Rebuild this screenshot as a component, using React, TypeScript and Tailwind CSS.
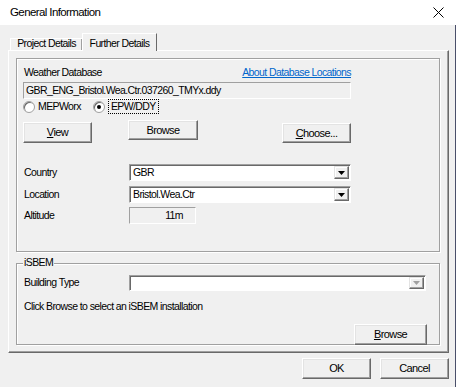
import type { ReactNode } from 'react'

const font = "font-['Liberation_Sans',Arial,sans-serif]"

const Btn = ({ children, className = '' }: { children: ReactNode; className?: string }) => (
  <div
    className={`flex items-center justify-center bg-[#f0f0f0] border-t border-l border-white border-r border-b border-r-[#696969] border-b-[#696969] shadow-[inset_-1px_-1px_0_#a0a0a0,inset_1px_1px_0_#e3e3e3] text-black text-[11px] whitespace-nowrap ${className}`}
  >
    {children}
  </div>
)

const Combo = ({ value, disabled = false, className = '' }: { value: string; disabled?: boolean; className?: string }) => (
  <div
    className={`flex items-stretch bg-white border-t border-l border-[#a0a0a0] border-r border-b border-r-white border-b-white shadow-[inset_1px_1px_0_#696969] ${className}`}
  >
    <div className="flex-1 pl-[3px] flex items-center text-black leading-none">{value}</div>
    <div className="w-[15px] my-[1px] mr-[1px] bg-[#f0f0f0] border-t border-l border-[#e3e3e3] border-r border-b border-r-[#696969] border-b-[#696969] shadow-[inset_-1px_-1px_0_#a0a0a0,inset_1px_1px_0_white] flex items-center justify-center">
      <svg width="7" height="4" viewBox="0 0 7 4">
        <path d="M0 0h7L3.5 4z" fill={disabled ? '#a0a0a0' : '#000'} />
      </svg>
    </div>
  </div>
)

const Radio = ({ checked }: { checked?: boolean }) => (
  <div className="w-[12px] h-[12px] rounded-full bg-white border border-[#a0a0a0] shadow-[inset_1px_1px_0_#696969] flex items-center justify-center">
    {checked && <div className="w-[4px] h-[4px] rounded-full bg-black" />}
  </div>
)

export default function App() {
  return (
    <div className={`w-[456px] h-[387px] flex flex-col bg-white ${font} text-[10.5px] tracking-[-0.6px] text-black whitespace-nowrap`}>
      {/* title bar */}
      <div className="h-[25px] flex items-center justify-between pl-[10px] pr-[12px] bg-white">
        <span className="text-[11.5px] tracking-[-0.6px]">General Information</span>
        <svg width="11" height="11" viewBox="0 0 11 11">
          <path d="M0.5 0.5L10.5 10.5M10.5 0.5L0.5 10.5" stroke="#000" strokeWidth="1" />
        </svg>
      </div>

      <div className="flex-1 bg-[#f0f0f0] border-r border-[#4a4f6a] flex flex-col">
        {/* tab strip */}
        <div className="h-[25px] pl-[10px] flex items-end">
          <div className="h-[12px] w-[72px] border-t border-l border-white shadow-[inset_-1px_0_0_#a0a0a0] flex items-center justify-center">
            <span className="-mt-[1px]">Project Details</span>
          </div>
          <div className="relative z-10 h-[18px] w-[75px] -mb-[1px] bg-[#f0f0f0] border-t border-l border-white border-r border-r-[#696969] flex items-start justify-center pt-[2px]">
            <span>Further Details</span>
          </div>
        </div>

        {/* tab panel */}
        <div className="ml-[8px] w-[441px] h-[303px] border-t border-l border-white border-r border-b border-r-[#696969] border-b-[#696969] shadow-[inset_-1px_-1px_0_#a0a0a0] pl-[7px] pt-[7px]">
          {/* weather group */}
          <div className="w-[424px] h-[194px] border border-[#a0a0a0] shadow-[inset_1px_1px_0_white,1px_1px_0_white] pl-[6px] flex flex-col">
            <div className="mt-[7px] h-[13px] w-[328px] flex items-center justify-between leading-none">
              <span className="ml-[1px]">Weather Database</span>
              <span className="text-[#0066cc] underline">About Database Locations</span>
            </div>
            <div className="mt-[3px] w-[328px] h-[17px] border-t border-l border-[#a0a0a0] border-r border-b border-r-white border-b-white flex items-center pl-[2px] leading-none">
              GBR_ENG_Bristol.Wea.Ctr.037260_TMYx.ddy
            </div>
            <div className="mt-[1px] h-[13px] flex items-center leading-none">
              <Radio />
              <span className="ml-[3px]">MEPWorx</span>
              <div className="ml-[12px]"><Radio checked /></div>
              <span className="ml-[3px] px-[2px] py-[1px] border border-dotted border-black">EPW/DDY</span>
            </div>
            <div className="mt-[7px] h-[23px] flex items-start">
              <Btn className="mt-[2px] w-[69px] h-[21px]">
                <span><span className="underline">V</span>iew</span>
              </Btn>
              <Btn className="ml-[36px] w-[70px] h-[20px]">Browse</Btn>
              <Btn className="ml-[84px] mt-[3px] w-[69px] h-[20px]">
                <span><span className="underline">C</span>hoose...</span>
              </Btn>
            </div>
            <div className="mt-[21px] flex items-center h-[17px]">
              <span className="w-[105px] ml-[1px]">Country</span>
              <Combo value="GBR" className="w-[222px] h-[17px]" />
            </div>
            <div className="mt-[5px] flex items-center h-[17px]">
              <span className="w-[105px] ml-[1px]">Location</span>
              <Combo value="Bristol.Wea.Ctr" className="w-[222px] h-[17px]" />
            </div>
            <div className="mt-[4px] flex items-center h-[17px]">
              <span className="w-[105px] ml-[1px]">Altitude</span>
              <div className="w-[67px] h-[17px] border-t border-l border-[#a0a0a0] border-r border-b border-r-white border-b-white flex items-center justify-end pr-[12px] leading-none">
                11m
              </div>
            </div>
          </div>

          {/* iSBEM group */}
          <div className="relative mt-[11px] w-[424px] h-[82px] border border-[#a0a0a0] shadow-[inset_1px_1px_0_white,1px_1px_0_white] pl-[6px] flex flex-col">
            <span className="absolute -top-[7px] left-[6px] px-[1px] bg-[#f0f0f0] leading-none">iSBEM</span>
            <div className="mt-[11px] flex items-center h-[16px]">
              <span className="w-[105px] ml-[1px]">Building Type</span>
              <Combo value="" disabled className="w-[297px] h-[16px]" />
            </div>
            <div className="mt-[10px] ml-[1px] leading-none">Click Browse to select an iSBEM installation</div>
            <div className="mt-[12px] flex justify-end pr-[12px]">
              <Btn className="w-[73px] h-[21px]">
                <span><span className="underline">B</span>rowse</span>
              </Btn>
            </div>
          </div>
        </div>

        {/* dialog buttons */}
        <div className="mt-[5px] flex justify-end gap-[9px] pr-[6px]">
          <Btn className="w-[69px] h-[21px]">OK</Btn>
          <Btn className="w-[69px] h-[21px]">Cancel</Btn>
        </div>
      </div>
    </div>
  )
}
